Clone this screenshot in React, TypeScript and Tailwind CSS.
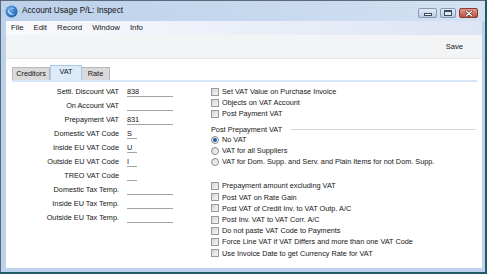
import React from 'react';

const leftRows: { label: string; value?: string; code?: boolean }[] = [
  { label: 'Settl. Discount VAT', value: '838' },
  { label: 'On Account VAT', value: '' },
  { label: 'Prepayment VAT', value: '831' },
  { label: 'Domestic VAT Code', value: 'S', code: true },
  { label: 'Inside EU VAT Code', value: 'U', code: true },
  { label: 'Outside EU VAT Code', value: 'I', code: true },
  { label: 'TREO VAT Code', value: '', code: true },
  { label: 'Domestic Tax Temp.', value: '' },
  { label: 'Inside EU Tax Temp.', value: '' },
  { label: 'Outside EU Tax Temp.', value: '' },
];

const topChecks = ['Set VAT Value on Purchase Invoice', 'Objects on VAT Account', 'Post Payment VAT'];

const radios = [
  'No VAT',
  'VAT for all Suppliers',
  'VAT for Dom. Supp. and Serv. and Plain Items for not Dom. Supp.',
];

const bottomChecks = [
  'Prepayment amount excluding VAT',
  'Post VAT on Rate Gain',
  'Post VAT of Credit Inv. to VAT Outp. A/C',
  'Post Inv. VAT to VAT Corr. A/C',
  'Do not paste VAT Code to Payments',
  'Force Line VAT if VAT Differs and more than one VAT Code',
  'Use Invoice Date to get Currency Rate for VAT',
];

const CheckBox = () => (
  <span className="h-[8px] w-[8px] shrink-0 border border-[#9a9a9a] bg-gradient-to-br from-[#d4d4d4] to-[#f6f6f6]" />
);

const Radio = ({ on }: { on?: boolean }) => (
  <span className="flex h-[8px] w-[8px] shrink-0 items-center justify-center rounded-full border border-[#8c8c8c] bg-gradient-to-br from-[#d8d8d8] to-[#fafafa]">
    {on && <span className="h-[4px] w-[4px] rounded-full bg-[#1e5fb4]" />}
  </span>
);

// little blue globe in the caption
const AppIcon = () => (
  <svg width="13" height="13" viewBox="0 0 13 13" className="shrink-0">
    <defs>
      <radialGradient id="g" cx="0.35" cy="0.35" r="0.7">
        <stop offset="0" stopColor="#6fb2ef" />
        <stop offset="1" stopColor="#1a5fb0" />
      </radialGradient>
    </defs>
    <circle cx="6.5" cy="6.5" r="6" fill="url(#g)" />
    <path d="M3 4.5 C2.5 8.5 6.5 11 10.5 8.8 C7.5 9.6 4.2 8.4 3 4.5 Z" fill="#fff" />
    <path d="M4.6 3.2 C6 2.3 8.2 2.6 9.2 3.8 C7.8 3.2 6 3.1 4.6 3.2 Z" fill="#e6f1fc" />
  </svg>
);

const CaptionButton = ({ kind }: { kind: 'min' | 'max' | 'close' }) => {
  const close = kind === 'close';
  return (
    <div
      className={
        'flex h-[10px] items-center justify-center rounded-[2px] border ' +
        (close
          ? 'w-[19px] border-[#8a3a32] bg-gradient-to-b from-[#e49a8e] to-[#c14d3d]'
          : kind === 'min'
          ? 'w-[19px] border-[#8798b0] bg-gradient-to-b from-[#e3ecf7] to-[#b9cbe3]'
          : 'w-[16px] border-[#8798b0] bg-gradient-to-b from-[#e3ecf7] to-[#b9cbe3]')
      }
    >
      {kind === 'min' && <span className="mt-[3px] h-[3px] w-[8px] border border-[#3c4a5e] bg-white" />}
      {kind === 'max' && <span className="h-[6px] w-[8px] border border-[#3c4a5e] border-t-2 bg-white/40" />}
      {close && (
        <svg width="8" height="7" viewBox="0 0 8 7">
          <path d="M1 1 L7 6 M7 1 L1 6" stroke="#5a2620" strokeWidth="2.6" strokeLinecap="round" />
          <path d="M1 1 L7 6 M7 1 L1 6" stroke="#fff" strokeWidth="1.3" strokeLinecap="round" />
        </svg>
      )}
    </div>
  );
};

export default function App() {
  return (
    <div className="h-[274px] w-[487px] overflow-hidden bg-[#1f5a66] font-['Liberation_Sans',Arial,sans-serif] text-[#151515]">
      <div className="flex h-[272px] w-[485px] flex-col border-l border-t border-[#5d6878] bg-[#bcd2ec]">
        {/* caption */}
        <div className="flex h-[20px] shrink-0 items-center bg-gradient-to-r from-[#bcd1ea] via-[#c6d8ee] to-[#d3e2f3] pl-[4px] pr-[7px]">
          <AppIcon />
          <span className="ml-[4px] text-[8.2px] leading-none text-[#101010]">Account Usage P/L: Inspect</span>
          <div className="ml-auto flex gap-[3px] self-start pt-[7px]">
            <CaptionButton kind="min" />
            <CaptionButton kind="max" />
            <CaptionButton kind="close" />
          </div>
        </div>

        <div className="flex min-h-0 flex-1 pb-[4px] pl-[5px] pr-[3px]">
          <div className="flex flex-1 flex-col bg-white">
            {/* menu bar */}
            <div className="flex h-[14px] shrink-0 items-center gap-[10px] bg-gradient-to-r from-[#f9fafd] to-[#dde4f3] pl-[5px] text-[7.8px] leading-none">
              <span>File</span>
              <span>Edit</span>
              <span>Record</span>
              <span>Window</span>
              <span>Info</span>
            </div>

            {/* toolbar */}
            <div className="flex h-[24px] shrink-0 items-center justify-end border-b border-[#e6e8ec] bg-[#f3f4f6] pr-[19px] text-[7.6px] leading-none">
              <span>Save</span>
            </div>

            {/* tabs */}
            <div className="flex pl-[6px] pr-[5px] pt-[6px]">
              <div className="flex flex-1 items-end border-b-2 border-[#d3e5f7] text-[7.3px] leading-none">
                <div className="flex h-[13px] w-[38px] items-center justify-center border border-b-0 border-[#b9b9b9] bg-[#dadada]">Creditors</div>
                <div className="flex h-[15px] w-[32px] items-center justify-center border border-b-0 border-[#a8c9ec] bg-[#dcebfa] pb-[2px]">VAT</div>
                <div className="flex h-[13px] w-[28px] items-center justify-center border border-l-0 border-b-0 border-[#b9b9b9] bg-[#dadada]">Rate</div>
              </div>
            </div>

            {/* panel */}
            <div className="flex flex-1 text-[7.3px] leading-none">
              <div className="flex w-[205px] flex-col pt-[3px]">
                {leftRows.map((r) => (
                  <div key={r.label} className="flex h-[14px] items-center">
                    <span className="w-[113px] text-right">{r.label}</span>
                    <span
                      className={
                        'ml-[8px] flex h-[10px] items-end border-b border-[#a3a3a3] pb-[1px] ' +
                        (r.code ? 'w-[10px]' : 'w-[46px]')
                      }
                    >
                      {r.value}
                    </span>
                  </div>
                ))}
              </div>

              <div className="flex flex-1 flex-col pr-[6px] pt-[4.5px]">
                {topChecks.map((t) => (
                  <div key={t} className="flex h-[11px] items-center gap-[3px]">
                    <CheckBox />
                    <span>{t}</span>
                  </div>
                ))}
                <div className="mt-[5px] flex h-[10px] items-center">
                  <span>Post Prepayment VAT</span>
                  <span className="ml-[9px] flex-1 border-t border-[#d6d6d6]" />
                </div>
                {radios.map((t, i) => (
                  <div key={t} className="flex h-[11px] items-center gap-[3px]">
                    <Radio on={i === 0} />
                    <span>{t}</span>
                  </div>
                ))}
                <div className="mt-[13px] flex flex-col">
                  {bottomChecks.map((t) => (
                    <div key={t} className="flex h-[11.2px] items-center gap-[3px]">
                      <CheckBox />
                      <span>{t}</span>
                    </div>
                  ))}
                </div>
              </div>
            </div>
          </div>
        </div>
      </div>
    </div>
  );
}
